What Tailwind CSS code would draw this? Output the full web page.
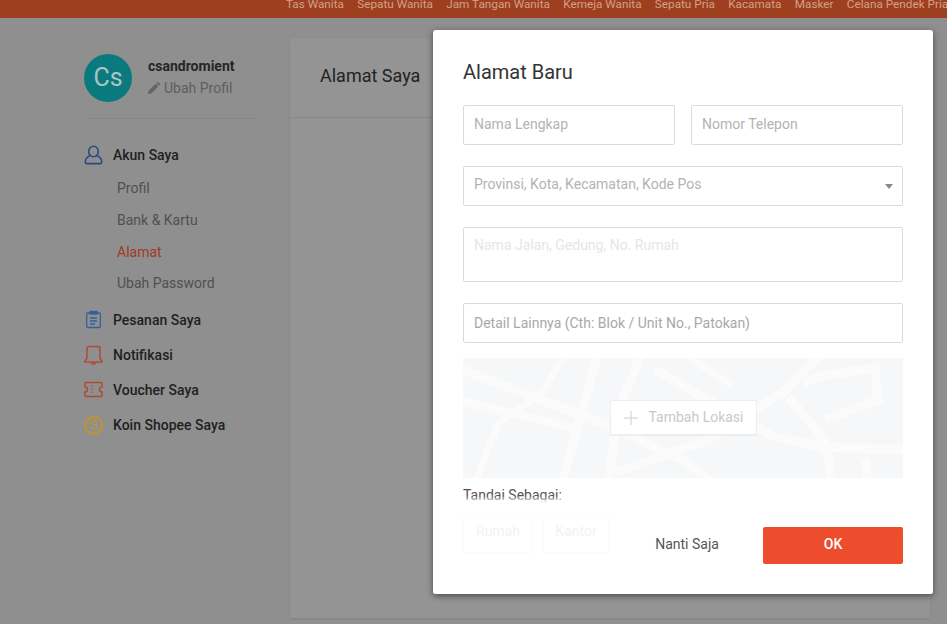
<!DOCTYPE html>
<html lang="en">
<head>
  <meta charset="UTF-8" />
  <title>Alamat Saya</title>
  <script src="https://cdn.jsdelivr.net/npm/@tailwindcss/browser@4"></script>
</head>
<body class="relative w-[947px] h-[624px] overflow-hidden bg-[#8f8f8f] font-[family-name:Roboto,sans-serif]">
  <!-- top bar -->
  <div class="h-[18px] bg-[#9e3f1f] overflow-hidden flex gap-[13.3px] pl-[286px] text-[11.75px] leading-[8px] whitespace-nowrap text-[#d3a08c]">
    <span>Tas Wanita</span>
    <span>Sepatu Wanita</span>
    <span>Jam Tangan Wanita</span>
    <span>Kemeja Wanita</span>
    <span>Sepatu Pria</span>
    <span>Kacamata</span>
    <span>Masker</span>
    <span>Celana Pendek Pria</span>
  </div>

  <div class="flex pl-[84px] pt-[20px]">
    <!-- sidebar -->
    <aside class="w-[176px] mr-[30px] shrink-0">
      <div class="flex gap-[16px] pt-[16px] pb-[16px] border-b border-[#888888]">
        <div class="w-[48px] h-[48px] rounded-full bg-[#0a7a7f] text-[#a9c4c4] text-[25px] flex items-center justify-center">Cs</div>
        <div class="pt-[3px]">
          <div class="text-[14px] leading-[18px] font-bold text-[#262626]">csandromient</div>
          <div class="flex items-center gap-[4px] mt-[4px] text-[14px] leading-[18px] text-[#5e5e5e]">
            <svg width="12" height="12" viewBox="0 0 12 12" fill="#636363"><path d="M0 12l.6-3.2L7.6 1.800l2.600 2.600-7 7zM8.300 1.100L9.200.2c.3-.3.7-.3 1 0l1.600 1.600c.3.3.3.7 0 1l-.9.9z"/></svg>
            <span>Ubah Profil</span>
          </div>
        </div>
      </div>

      <nav class="mt-[23px] text-[14px] leading-[20px]">
        <div class="flex items-center gap-[10px] h-[26px] font-medium text-[#1f1f1f]">
          <svg class="w-[19px] h-[20px]" viewBox="0 0 19 20" fill="none" stroke="#2b4a86" stroke-width="1.6"><ellipse cx="9.500" cy="6.500" rx="4.800" ry="5.200"/><path d="M6.300 10.500C3.500 11.500 1.500 13.500 1.200 17c0 1 .5 1.600 1.400 1.600h13.800c.9 0 1.400-.6 1.400-1.600-.3-3.500-2.300-5.500-5.100-6.500"/></svg>
          <span>Akun Saya</span>
        </div>
        <div class="pl-[33px] text-[#505050] mt-[10px] flex flex-col gap-[12px]">
          <span>Profil</span>
          <span>Bank &amp; Kartu</span>
          <span class="text-[#a1382a]">Alamat</span>
          <span class="-mt-[1px]">Ubah Password</span>
        </div>
        <div class="mt-[14px] flex flex-col gap-[9px] font-medium text-[#1f1f1f]">
          <div class="flex items-center gap-[10px] h-[26px]">
            <svg class="w-[19px] h-[20px]" viewBox="0 0 19 20" fill="none" stroke="#34609c" stroke-width="1.300"><rect x="2.700" y="3" width="13.600" height="14.500" rx="1"/><rect x="6" y="1.500" width="7" height="2.500" fill="#34609c"/><path d="M6 8h7M6 11h7M6 14h5"/></svg>
            <span>Pesanan Saya</span>
          </div>
          <div class="flex items-center gap-[10px] h-[26px]">
            <svg class="w-[19px] h-[20px]" viewBox="0 0 19 20" fill="none" stroke="#b04a38" stroke-width="1.500"><path d="M5 1.500h9a2 2 0 0 1 2 2v10l2 2.500v1H1v-1l2-2.500v-10a2 2 0 0 1 2-2z"/><path d="M7.500 17.500c0 2 4 2 4 0"/></svg>
            <span>Notifikasi</span>
          </div>
          <div class="flex items-center gap-[10px] h-[26px]">
            <svg class="w-[19px] h-[20px]" viewBox="0 0 19 20" fill="none" stroke="#b04a38" stroke-width="1.500"><path d="M2 2.500h15a1 1 0 0 1 1 1v3.500a2.500 2.500 0 0 0 0 5v3.500a1 1 0 0 1-1 1H2a1 1 0 0 1-1-1V12a2.500 2.500 0 0 0 0-5V3.500a1 1 0 0 1 1-1z"/><path d="M8 5.500v9" stroke-dasharray="1.500 1.500" stroke-width="1.200"/></svg>
            <span>Voucher Saya</span>
          </div>
          <div class="flex items-center gap-[10px] h-[26px]">
            <div class="w-[19px] h-[19px] rounded-full border-2 border-[#c0952b] text-[#c0952b] text-[12px] leading-none flex items-center justify-center font-normal">S</div>
            <span>Koin Shopee Saya</span>
          </div>
        </div>
      </nav>
    </aside>

    <!-- main card -->
    <main class="w-[640px] h-[580px] shrink-0 bg-[#949494] shadow-[0_1px_2px_rgba(0,0,0,0.1)]">
      <div class="h-[80px] border-b border-[#888888] pl-[30px] flex items-center text-[18px] text-[#222222] pb-[5px]">Alamat Saya</div>
    </main>
  </div>

  <!-- modal -->
  <div class="absolute left-[433px] top-[30px] w-[500px] h-[564px] bg-white rounded-[3px] shadow-[0_2px_6px_rgba(0,0,0,0.5)] overflow-hidden px-[30px] pt-[28px]">
    <h2 class="text-[20px] leading-[28px] text-[#333333] mb-[19px]">Alamat Baru</h2>

    <div class="flex gap-[16px]">
      <input class="w-[212px] h-[40px] border border-[#dbdbdb] rounded-[2px] px-[10px] pb-[2px] text-[14px] placeholder:text-[#b3b3b3]" placeholder="Nama Lengkap" />
      <input class="w-[212px] h-[40px] border border-[#dbdbdb] rounded-[2px] px-[10px] pb-[2px] text-[14px] placeholder:text-[#b3b3b3]" placeholder="Nomor Telepon" />
    </div>

    <div class="mt-[21px] h-[40px] border border-[#dbdbdb] rounded-[2px] px-[10px] flex items-center justify-between text-[14px] text-[#b3b3b3]">
      <span class="-mt-[4px]">Provinsi, Kota, Kecamatan, Kode Pos</span>
      <span class="w-0 h-0 border-x-[4px] border-x-transparent border-t-[5px] border-t-[#888888] mt-[1px] -mr-[1px]"></span>
    </div>

    <textarea class="block w-full mt-[21px] h-[55px] border border-[#dbdbdb] rounded-[2px] px-[10px] py-[8px] text-[14px] leading-[18px] resize-none placeholder:text-[#e6e6e6]" placeholder="Nama Jalan, Gedung, No. Rumah"></textarea>

    <input class="block w-full mt-[21px] h-[40px] border border-[#dbdbdb] rounded-[2px] px-[10px] text-[14px] placeholder:text-[#a8a8a8]" placeholder="Detail Lainnya (Cth: Blok / Unit No., Patokan)" />

    <div class="relative mt-[15px] h-[120px] bg-[#f6f7f8] flex items-center justify-center overflow-hidden">
      <svg class="absolute inset-0 blur-[0.6px]" width="440" height="120" viewBox="0 0 440 120" fill="none" stroke="#fbfbfc" stroke-width="9">
        <path d="M-5 10L149 69L225 105L250 125"/>
        <path d="M-5 42L119 72"/>
        <path d="M135 -5L99 125"/>
        <path d="M102 -5L79 35L35 65L12 125" stroke-width="7"/>
        <path d="M179 -5L155 52L145 125"/>
        <path d="M192 12L312 79L359 89L445 92"/>
        <path d="M359 -5L319 35L245 82L152 115"/>
        <path d="M340 25L359 18L412 10L415 42L362 62"/>
        <path d="M325 39L362 82L369 125"/>
        <path d="M402 100L405 125"/>
        <path d="M220 -5L270 28" stroke-width="7"/>
      </svg>
      <div class="relative w-[147px] h-[35px] bg-white border border-[#eeeeee] rounded-[2px] shadow-[0_1px_1px_rgba(0,0,0,0.05)] flex items-center pl-[12px] gap-[10px] text-[14px] text-[#c9c9c9] -mt-[1px]">
        <svg width="16" height="16" viewBox="0 0 16 16" stroke="#cccccc" stroke-width="1"><path d="M8 1v14M1 8h14"/></svg>
        <span>Tambah Lokasi</span>
      </div>
    </div>

    <div class="mt-[8px] text-[14px] leading-[18px] text-[#555555]">Tandai Sebagai:</div>
    <div class="mt-[9px] flex gap-[10px] text-[14px] text-[#999999]">
      <div class="w-[70px] h-[40px] pb-[3px] border border-[#e5e5e5] rounded-[2px] flex items-center justify-center">Rumah</div>
      <div class="w-[66px] h-[40px] pb-[3px] border border-[#e5e5e5] rounded-[2px] flex items-center justify-center">Kantor</div>
    </div>

    <!-- fade and footer sit over the scrolled form -->
    <div class="absolute left-0 right-0 top-[466px] h-[98px] bg-[linear-gradient(to_bottom,rgba(255,255,255,0)_0px,rgba(255,255,255,0.9)_6px,rgba(255,255,255,0.8)_100%)]"></div>
    <div class="absolute right-[30px] bottom-[30px] flex items-center">
      <button class="w-[140px] h-[37px] pb-[2px] text-[14px] text-[#555555] text-center mr-[6px]">Nanti Saja</button>
      <button class="w-[140px] h-[37px] pb-[2px] rounded-[2px] bg-[#ee4d2d] text-white text-[14px] font-medium">OK</button>
    </div>
  </div>
</body>
</html>
